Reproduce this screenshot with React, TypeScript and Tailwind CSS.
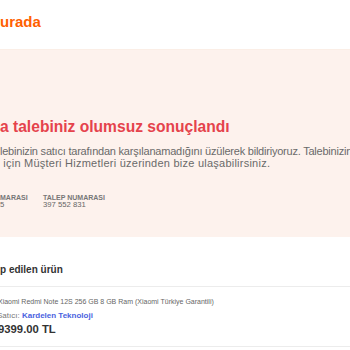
import React from "react";

export default function App() {
  return (
    <div className="w-[350px] h-[350px] overflow-hidden bg-white font-['Liberation_Sans',Arial,sans-serif]">
      <div className="h-[49px] pt-[14px]">
        <div className="text-[15px] leading-[16px] font-bold text-[#ff6000] whitespace-nowrap">urada</div>
      </div>
      <div className="h-[188px] bg-[#fdf2ed] border-t border-[#fbeee6] overflow-hidden">
        <div className="mt-[69px] text-[15.6px] leading-[16px] font-bold text-[#e5434c] whitespace-nowrap">
          a talebiniz olumsuz sonuçlandı
        </div>
        <div className="mt-[10px] text-[11px] leading-[12px] text-[#6a6a6a] whitespace-nowrap">
          <div className="tracking-[-0.22px]">lebinizin satıcı tarafından karşılanamadığını üzülerek bildiriyoruz. Talebinizin</div>
          <div className="tracking-[0.24px]">&nbsp;için Müşteri Hizmetleri üzerinden bize ulaşabilirsiniz.</div>
        </div>
        <div className="mt-[25px] flex whitespace-nowrap">
          <div className="w-[43px] shrink-0">
            <div className="text-[7px] leading-[7px] font-bold text-[#777]">MARASI</div>
            <div className="text-[7.7px] leading-[8px] text-[#666]">5</div>
          </div>
          <div>
            <div className="text-[7px] leading-[7px] font-bold text-[#777]">TALEP NUMARASI</div>
            <div className="text-[7.7px] leading-[8px] text-[#666]">397 552 831</div>
          </div>
        </div>
      </div>
      <div className="mt-[27px] text-[10px] leading-[12px] font-bold text-[#333] whitespace-nowrap">p edilen ürün</div>
      <div className="mt-[10px] h-px bg-[#ececec]" />
      <div className="mt-[10.5px] text-[7px] leading-[8px] text-[#666] whitespace-nowrap -ml-[2px]">
        Xiaomi Redmi Note 12S 256 GB 8 GB Ram (Xiaomi Türkiye Garantili)
      </div>
      <div className="mt-[5px] text-[8px] leading-[9px] whitespace-nowrap -ml-[3px]">
        <span className="text-[#777]">Satıcı: </span>
        <span className="text-[#4a62e0] font-bold">Kardelen Teknoloji</span>
      </div>
      <div className="mt-[3px] text-[11.3px] leading-[12px] font-bold text-[#333] whitespace-nowrap -ml-[2px]">9399.00 TL</div>
      <div className="mt-[11px] h-px bg-[#ececec]" />
    </div>
  );
}
